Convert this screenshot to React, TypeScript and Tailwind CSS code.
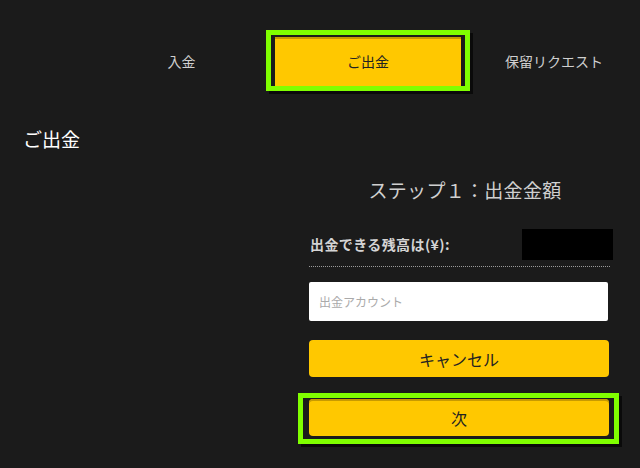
const font = { fontFamily: '"Noto Sans CJK JP", "Noto Sans", sans-serif' };

function Highlight({ className }: { className: string }) {
  return (
    <div
      className={`pointer-events-none absolute border-[5px] border-[#80ff00] shadow-[3px_3px_0_#0a0a0a] ${className}`}
    />
  );
}

export default function App() {
  return (
    <div className="w-[640px] h-[468px] overflow-hidden bg-[#1b1b1b] text-[#dddddd]" style={font}>
      {/* tabs */}
      <div className="flex pt-[37px] pl-[88px]">
        <div className="w-[187px] shrink-0 h-[49px] flex items-center justify-center text-[14px] text-[#cfcfcf]">
          入金
        </div>
        <div className="relative w-[186px] shrink-0">
          <Highlight className="-left-[9px] -right-[9px] -top-[7px] -bottom-[5px]" />
          <button className="w-full h-[49px] bg-[#ffc800] shadow-[inset_0_2px_0_#c89a00] text-[14px] text-[#222]">
            ご出金
          </button>
        </div>
        <div className="w-[186px] shrink-0 h-[49px] flex items-center justify-center text-[14px] text-[#cfcfcf]">
          保留リクエスト
        </div>
      </div>

      <h1 className="mt-[40px] ml-[23px] text-[19px] leading-[26px] text-white">ご出金</h1>

      <div className="ml-[309px] w-[301px]">
        <h2 className="mt-[25px] text-center pl-[11px] text-[19px] leading-[26px] tracking-[0.3px] text-[#d0d0d0]">
          ステップ１：出金金額
        </h2>

        <div className="mt-[26px] flex items-center justify-between pb-[6px] border-b border-dotted border-[#9a9a9a]">
          <span className="pl-[1px] text-[14px] font-bold tracking-[0.4px] text-[#d4d4d4]">出金できる残高は(¥):</span>
          <div className="w-[91px] h-[31px] bg-black mr-[-3px]" />
        </div>

        <input
          placeholder="出金アカウント"
          className="mt-[15px] block w-[299px] h-[39px] rounded-[2px] bg-white px-[10px] text-[12px] text-[#333] placeholder-[#aaaaaa] outline-none"
          style={font}
        />

        <button className="mt-[19px] w-[300px] h-[37px] rounded-[4px] bg-[#ffc800] text-[16px] text-[#222]">
          キャンセル
        </button>

        <div className="relative mt-[22px] w-[300px]">
          <Highlight className="-left-[11px] -right-[10px] -top-[6px] -bottom-[8px]" />
          <button className="w-full h-[37px] rounded-[4px] bg-[#ffc800] shadow-[inset_0_2px_0_#c89a00] text-[16px] text-[#222]">
            次
          </button>
        </div>
      </div>
    </div>
  );
}
